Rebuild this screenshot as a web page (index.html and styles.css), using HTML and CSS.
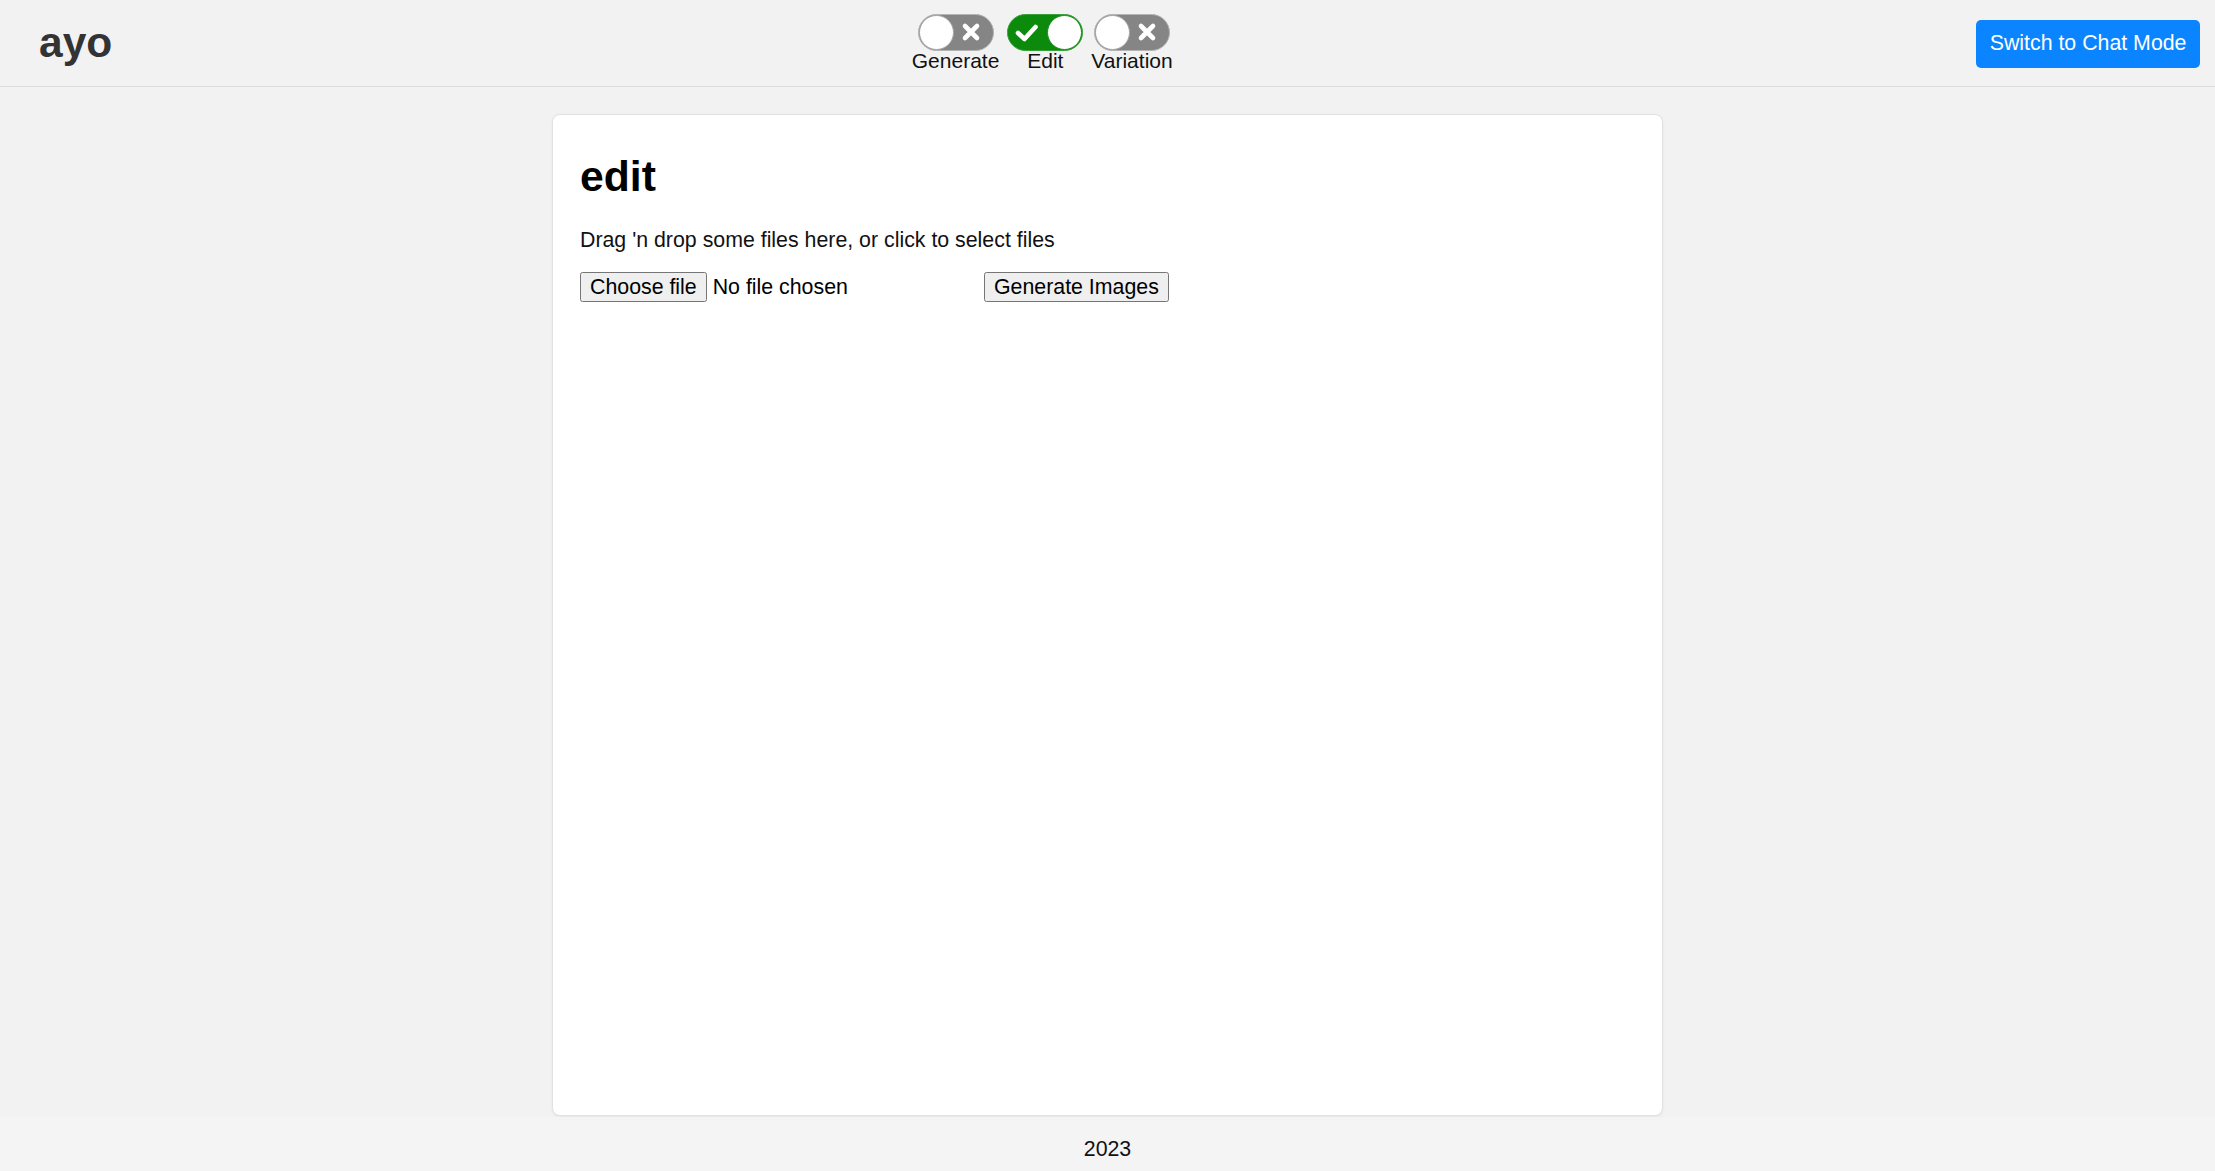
FILE: index.html
```html
<!DOCTYPE html>
<html lang="en">
<head>
<meta charset="utf-8">
<title>ayo</title>
<link rel="stylesheet" href="styles.css">
</head>
<body>
<header class="topbar">
  <div class="logo">ayo</div>
  <div class="modes">
    <div class="mode">
      <svg class="toggle" viewBox="0 0 76 37" width="76" height="37">
        <rect x="0.5" y="0.5" width="75" height="36" rx="18" fill="#858585" stroke="#b3b3b3"/>
        <path d="M47 12 L59 24 M59 12 L47 24" stroke="#fff" stroke-width="4.6" stroke-linecap="round"/>
        <circle cx="18.5" cy="18.5" r="17" fill="#fff" stroke="#a6a6a6"/>
      </svg>
      <span class="mode-label">Generate</span>
    </div>
    <div class="mode">
      <svg class="toggle" viewBox="0 0 76 37" width="76" height="37">
        <rect x="0.5" y="0.5" width="75" height="36" rx="18" fill="#0b8a0b" stroke="#3a9f3a"/>
        <path d="M11 19 L17.5 25 L28.5 13" fill="none" stroke="#fff" stroke-width="4.6" stroke-linecap="round" stroke-linejoin="round"/>
        <circle cx="57.5" cy="18.5" r="17" fill="#fff" stroke="#1f8f1f"/>
      </svg>
      <span class="mode-label">Edit</span>
    </div>
    <div class="mode">
      <svg class="toggle" viewBox="0 0 76 37" width="76" height="37">
        <rect x="0.5" y="0.5" width="75" height="36" rx="18" fill="#858585" stroke="#b3b3b3"/>
        <path d="M47 12 L59 24 M59 12 L47 24" stroke="#fff" stroke-width="4.6" stroke-linecap="round"/>
        <circle cx="18.5" cy="18.5" r="17" fill="#fff" stroke="#a6a6a6"/>
      </svg>
      <span class="mode-label">Variation</span>
    </div>
  </div>
  <button class="chat-btn">Switch to Chat Mode</button>
</header>

<main class="main">
  <section class="card">
    <h1 class="title">edit</h1>
    <p class="hint">Drag 'n drop some files here, or click to select files</p>
    <div class="actions">
      <div class="file">
        <button class="native-btn">Choose file</button>
        <span class="file-name">No file chosen</span>
      </div>
      <button class="native-btn">Generate Images</button>
    </div>
  </section>
</main>

<footer class="footer">2023</footer>
</body>
</html>
```

FILE: styles.css
```css
html, body {
  margin: 0;
  padding: 0;
}

body {
  background: #f2f2f2;
  font-family: "Liberation Sans", Arial, sans-serif;
  color: #111;
  height: 1171px;
  overflow: hidden;
}

.topbar {
  height: 86px;
  border-bottom: 1px solid #dcdcdc;
  display: flex;
  align-items: center;
  justify-content: space-between;
  padding: 0 15px 0 39px;
}

.logo {
  font-size: 42.5px;
  font-weight: bold;
  color: #333;
  line-height: 1;
  margin-top: 0;
}

.modes {
  display: flex;
  gap: 8px;
  margin-top: -1px;
  margin-right: 4px;
}

.mode {
  display: flex;
  flex-direction: column;
  align-items: center;
}

.toggle {
  display: block;
}

.mode-label {
  font-size: 21px;
  line-height: 21px;
  color: #111;
  margin-top: -1px;
}

.chat-btn {
  height: 48px;
  padding: 0 13.5px;
  background: #0a84ff;
  color: #fff;
  border: none;
  border-radius: 5px;
  font-family: "Liberation Sans", Arial, sans-serif;
  font-size: 21.33px;
  margin-top: 1px;
}

.main {
  padding: 27px 0 1px;
}

.card {
  width: 1055px;
  height: 990px;
  margin: 0 auto;
  background: #fff;
  border: 1px solid #e2e2e2;
  border-radius: 8px;
  box-shadow: 0 1px 3px rgba(0, 0, 0, 0.06);
  padding: 10px 27px 0 27px;
}

.title {
  font-size: 42.67px;
  font-weight: bold;
  color: #000;
  margin: 28px 0 28px 0;
  line-height: 1.117;
}

.hint {
  font-size: 21.33px;
  line-height: 1.117;
  color: #111;
  margin: 0 0 20px 0;
}

.actions {
  display: flex;
  align-items: center;
}

.file {
  width: 404px;
  display: flex;
  align-items: center;
  gap: 6px;
}

.native-btn {
  height: 30px;
  padding: 0 9px;
  background: #efefef;
  border: 1px solid #767676;
  border-radius: 2.5px;
  font-family: "Liberation Sans", Arial, sans-serif;
  font-size: 21.33px;
  color: #000;
  line-height: 28px;
}

.file-name {
  font-size: 21.33px;
  color: #000;
}

.footer {
  background: #f4f4f4;
  text-align: center;
  font-size: 21.33px;
  color: #111;
  padding: 20px 0;
  line-height: 24px;
}
```
